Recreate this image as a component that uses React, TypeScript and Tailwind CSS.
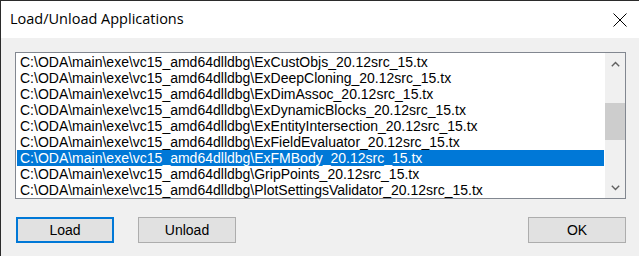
import React from "react";

// Load/Unload Applications dialog (Win10 look, 125% scale)

const files = [
  "ExCustObjs_20.12src_15.tx",
  "ExDeepCloning_20.12src_15.tx",
  "ExDimAssoc_20.12src_15.tx",
  "ExDynamicBlocks_20.12src_15.tx",
  "ExEntityIntersection_20.12src_15.tx",
  "ExFieldEvaluator_20.12src_15.tx",
  "ExFMBody_20.12src_15.tx",
  "GripPoints_20.12src_15.tx",
  "PlotSettingsValidator_20.12src_15.tx",
];

const prefix = "C:\\ODA\\main\\exe\\vc15_amd64dlldbg\\";
const selected = 6;

function Chevron({ up }: { up?: boolean }) {
  return (
    <svg width="9" height="6" viewBox="0 0 9 6" className="block">
      <path
        d={up ? "M0.8 5.2 L4.5 1.5 L8.2 5.2" : "M0.8 0.8 L4.5 4.5 L8.2 0.8"}
        fill="none"
        stroke="#606060"
        strokeWidth="1.4"
      />
    </svg>
  );
}

export default function App() {
  return (
    <div className="w-[639px] h-[256px] overflow-hidden bg-[#f0f0f0] border-t border-l border-[#2b2b2b] flex flex-col font-['Liberation_Sans',Arial,sans-serif] text-black">
      {/* title bar */}
      <div className="h-[37px] shrink-0 bg-white flex items-center justify-between pl-[9px] pr-[12px]">
        <span className="text-[14.5px] font-['Open_Sans',sans-serif] leading-none text-[#000] pb-[1px]">
          Load/Unload Applications
        </span>
        <svg width="14" height="14" viewBox="0 0 14 14" className="block">
          <path d="M0.5 0.5 L13.5 13.5 M13.5 0.5 L0.5 13.5" stroke="#000" strokeWidth="1" />
        </svg>
      </div>

      {/* body */}
      <div className="flex-1 flex flex-col pl-[14px] pr-[13px] pt-[14px]">
        <div className="h-[147px] border border-[#828790] bg-white flex">
          <div className="flex-1 p-[1px] overflow-hidden">
            {files.map((f, i) => (
              <div
                key={f}
                className={`h-[16px] leading-[16px] pl-[3px] text-[14px] whitespace-nowrap ${
                  i === selected ? "bg-[#0078d7] text-white" : ""
                }`}
              >
                {prefix + f}
              </div>
            ))}
          </div>
          <div className="w-[20px] bg-[#f0f0f0] flex flex-col">
            <div className="h-[21px] flex items-center justify-center">
              <Chevron up />
            </div>
            <div className="h-[29px]" />
            <div className="h-[37px] bg-[#cdcdcd]" />
            <div className="flex-1" />
            <div className="h-[21px] flex items-center justify-center">
              <Chevron />
            </div>
          </div>
        </div>

        <div className="flex items-center mt-[18px] pl-[1px]">
          <button className="w-[98px] h-[26px] bg-[#e1e1e1] border-2 border-[#0078d7] text-[14px]">
            Load
          </button>
          <button className="ml-[24px] w-[98px] h-[26px] bg-[#e1e1e1] border border-[#adadad] text-[14px]">
            Unload
          </button>
          <button className="ml-auto w-[98px] h-[26px] bg-[#e1e1e1] border border-[#adadad] text-[14px]">
            OK
          </button>
        </div>
      </div>
    </div>
  );
}
